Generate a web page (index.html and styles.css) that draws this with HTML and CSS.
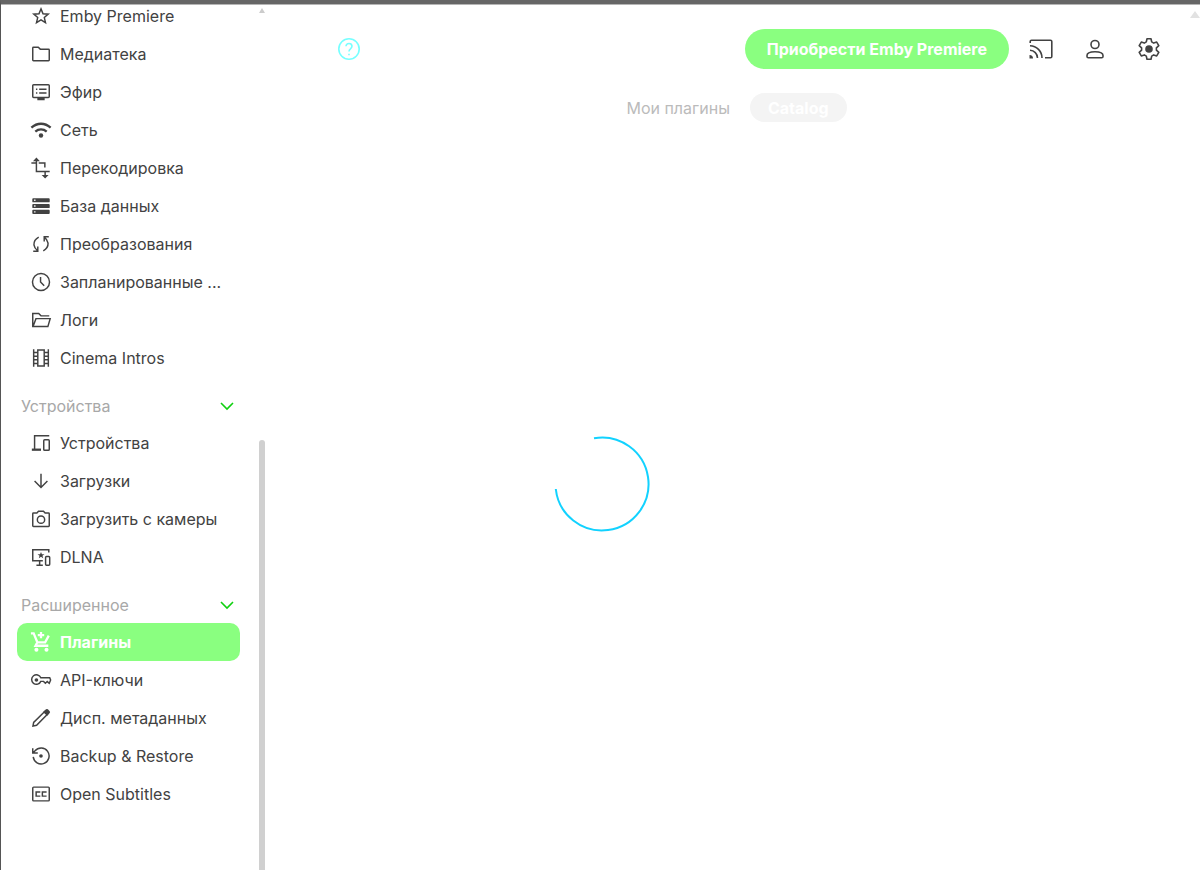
FILE: index.html
```html
<!DOCTYPE html>
<html lang="ru">

<head>
    <meta charset="UTF-8">
    <meta name="viewport" content="width=device-width, initial-scale=1.0">
    <title>Emby</title>
    <link rel="stylesheet" href="styles.css">
</head>

<body>
<div class="app">
    <aside class="sidebar">
        <nav>
            <ul class="menu">
                <li><a href="#premiere"><svg viewBox="0 0 24 24"><path d="M12 4.200l2.200 5.300 5.700.5-4.300 3.700 1.300 5.600L12 16.300l-4.900 3 1.300-5.600L4.100 10l5.700-.5z"/></svg><span>Emby Premiere</span></a></li>
                <li><a href="#library"><svg viewBox="0 0 24 24"><path d="M3 5.500Q3 4.700 3.800 4.700H9l2.200 2H20.200q.8 0 .8.800v11q0 .8-.8.800H3.800q-.8 0-.8-.8z"/></svg><span>Медиатека</span></a></li>
                <li><a href="#live"><svg viewBox="0 0 24 24"><rect x="3" y="4" width="18" height="14" rx="1"/><path d="M10 9h8M10 13h8M6.500 9H8M6.500 13H8"/><path class="solid" d="M8 18h8v3H8z"/></svg><span>Эфир</span></a></li>
                <li><a href="#network"><svg viewBox="0 0 24 24"><path class="thick" d="M1.500 9.500Q6.200 5.200 12 5.200t10.500 4.300M5.800 13.700Q8.500 11.300 12 11.300t6.200 2.400"/><circle class="solid" cx="12" cy="18" r="2.400"/></svg><span>Сеть</span></a></li>
                <li><a href="#transcoding"><svg viewBox="0 0 24 24"><path d="M7 3v12.800h14.500M1.500 6.500H7M9.500 6.500h6.700v5M16.500 16v6"/><path class="solid" d="M7 .5L3.200 4.500h7.600zM16.500 23.500l-3.800-4h7.600z"/></svg><span>Перекодировка</span></a></li>
                <li><a href="#database"><svg viewBox="0 0 24 24"><path class="solid" fill-rule="evenodd" d="M3.500 3.500h17q1 0 1 1v2.500q0 1-1 1h-17q-1 0-1-1V4.500q0-1 1-1zM4.500 5v1.500H6V5zM3.500 9.800h17q1 0 1 1v2.500q0 1-1 1h-17q-1 0-1-1v-2.500q0-1 1-1zM4.500 11.300v1.500H6v-1.500zM3.500 16.200h17q1 0 1 1v2.500q0 1-1 1h-17q-1 0-1-1v-2.500q0-1 1-1zM4.500 17.700v1.500H6v-1.500z"/></svg><span>База данных</span></a></li>
                <li><a href="#conversions"><svg viewBox="0 0 24 24"><path d="M9.500 4.500Q4 7.500 4.300 13 5 17 8 19M3.500 19.800h5v-5M14.500 19.500Q20 16.500 19.700 11 19 7 16 5M20.500 4.200h-5v5"/></svg><span>Преобразования</span></a></li>
                <li><a href="#tasks" title="Запланированные задачи"><svg viewBox="0 0 24 24"><circle cx="12" cy="12" r="9.300"/><path d="M11.500 6.500v5.500l4 4.200"/></svg><span>Запланированные ...</span></a></li>
                <li><a href="#logs"><svg viewBox="0 0 24 24"><path d="M21 7.500H12L9.500 5H3v14.200h16.500L22 10.500H6.500L3.300 19"/></svg><span>Логи</span></a></li>
                <li><a href="#intros"><svg viewBox="0 0 24 24"><path d="M4 2.500v19M8.500 2.500v19M15.500 2.500v19M20 2.500v19M8.500 3.300h7M8.500 20.700h7M4 6h4.500M4 10h4.500M4 14h4.500M4 18h4.500M15.500 6H20M15.500 10H20M15.500 14H20M15.500 18H20"/></svg><span>Cinema Intros</span></a></li>
            </ul>

            <button class="section" type="button">Устройства<svg viewBox="0 0 14 10"><path d="M1 2l6 6 6-6"/></svg></button>
            <ul class="menu">
                <li><a href="#devices"><svg viewBox="0 0 24 24"><path d="M21 4H5v14.500"/><path class="thick" d="M2 19.300H12"/><rect x="15" y="8.500" width="6" height="11.500" rx="1"/></svg><span>Устройства</span></a></li>
                <li><a href="#downloads"><svg viewBox="0 0 24 24"><path d="M12 4v15M5 12l7 7 7-7"/></svg><span>Загрузки</span></a></li>
                <li><a href="#camera"><svg viewBox="0 0 24 24"><path d="M3.800 5.500H7.500L9.300 3.500h5.400l1.800 2h3.700q.8 0 .8.800v13q0 .8-.8.800H3.800q-.8 0-.8-.8v-13q0-.8.8-.8z"/><circle cx="12" cy="12.700" r="4"/></svg><span>Загрузить с камеры</span></a></li>
                <li><a href="#dlna"><svg viewBox="0 0 24 24"><path d="M20.500 7V4H3v12h11M10.500 16v5M7 21h7"/><rect x="17" y="11.500" width="4.500" height="9.500" rx="1"/><path class="solid" d="M12 6.500l1 2.500h2.800l-2.200 1.700.8 2.700L12 11.800l-2.400 1.600.8-2.700L8.200 9H11z"/></svg><span>DLNA</span></a></li>
            </ul>

            <button class="section" type="button">Расширенное<svg viewBox="0 0 14 10"><path d="M1 2l6 6 6-6"/></svg></button>
            <ul class="menu">
                <li><a class="active" href="#plugins"><svg viewBox="0 0 24 24"><path class="thick" d="M1 2.500h3L8 12.300h8.500L20.500 5M8 12.300l-2 3.800H20M12 1v7M8.500 4.500h7"/><circle class="solid" cx="7" cy="20.500" r="2.200"/><circle class="solid" cx="18" cy="20.500" r="2.200"/></svg><span>Плагины</span></a></li>
                <li><a href="#keys"><svg viewBox="0 0 24 24"><path d="M11.800 9.500H21.500L22.500 12l-1.500 3.500-2.200-1.800-2 1.800-2-2h-3A5.200 5.200 0 1 1 11.800 9.500z"/><circle class="solid" cx="7" cy="12" r="2"/></svg><span>API-ключи</span></a></li>
                <li><a href="#metadata"><svg viewBox="0 0 24 24"><path d="M3.200 20.800l.8-4L15.500 5.500l3 3L7.200 20z"/><path class="solid" d="M14.500 5l3-2.500q1-.8 2 0l2 2q.8 1 0 2l-2.500 3z"/></svg><span>Дисп. метаданных</span></a></li>
                <li><a href="#backup"><svg viewBox="0 0 24 24"><path d="M3.500 13A8.700 8.700 0 1 0 5.500 6.300L3.500 8.500M3 3.500v5.300h5.500"/><circle class="solid" cx="12" cy="12" r="2"/></svg><span>Backup &amp; Restore</span></a></li>
                <li><a href="#subtitles"><svg viewBox="0 0 24 24"><rect x="3" y="4.500" width="18" height="15" rx="1"/><path d="M10.500 10.500V9.700H6.700v4.600h3.800v-.8M17.300 10.500V9.700h-3.800v4.600h3.800v-.8"/></svg><span>Open Subtitles</span></a></li>
            </ul>
        </nav>
        <div class="scrollbar">
            <div class="scroll-up"></div>
            <div class="scroll-thumb"></div>
        </div>
    </aside>

    <main>
        <header>
            <a class="help" href="#help" aria-label="Справка"><svg viewBox="0 0 24 24"><circle cx="12" cy="12" r="10.200"/><path d="M9 9.300Q9.200 6.500 12 6.500t3 2.600q0 1.600-1.500 2.700T12 14.500"/><path d="M12 16.700v1.600"/></svg></a>
            <button class="premiere" type="button">Приобрести Emby Premiere</button>
            <button class="icon" type="button" aria-label="Трансляция"><svg viewBox="0 0 24 24"><path d="M1.200 6V4.500q0-1.300 1.300-1.300h19q1.300 0 1.300 1.300v15q0 1.300-1.300 1.300H16M1 8.700A12.300 12.300 0 0 1 13 21M1 13.200A7.800 7.800 0 0 1 8.500 21"/><path class="solid" d="M.5 18a3.500 3.500 0 0 1 3.500 3.500H.5z"/></svg></button>
            <button class="icon" type="button" aria-label="Пользователь"><svg viewBox="0 0 24 24"><circle cx="12" cy="7.500" r="4"/><path d="M4 18.500q0-3.700 8-3.700t8 3.700v1q0 1.300-1.300 1.300H5.300Q4 20.800 4 19.500z"/></svg></button>
            <button class="icon" type="button" aria-label="Настройки"><svg viewBox="0 0 24 24"><path stroke-linejoin="round" d="M10 1.800h4l.7 3.100 2 1.200 3-1 2.100 3.500-2.400 2.200v2.400l2.400 2.200-2.100 3.500-3-1-2 1.200-.7 3.100h-4l-.7-3.100-2-1.200-3 1-2.100-3.500 2.400-2.200v-2.400L2.200 8.600l2.100-3.500 3 1 2-1.200z"/><circle class="solid" cx="12" cy="12" r="3.800"/></svg></button>
        </header>
        <div class="tabs">
            <button type="button">Мои плагины</button>
            <button class="selected" type="button">Catalog</button>
        </div>
    </main>
    <div class="page-scroll">
        <div class="scroll-up"></div>
    </div>

    <div class="loading">
        <svg viewBox="0 0 96 96"><path d="M40 2.200A46.500 46.500 0 1 1 1.800 53"/></svg>
    </div>
</div>
</body>

</html>
```

FILE: styles.css
```css
html, body {
    margin: 0;
    height: 100%;
    overflow: hidden;
}

body {
    font-family: Inter, "Open Sans", sans-serif;
    font-size: 16px;
    color: #424242;
    background: #fff;
}

button {
    font: inherit;
    border: 0;
    background: none;
    cursor: pointer;
}

svg {
    flex: none;
    fill: none;
    stroke: currentColor;
    stroke-width: 1.6;
}

.solid {
    fill: currentColor;
    stroke: none;
}

.thick {
    stroke-width: 2.5;
}

.app {
    position: relative;
    display: flex;
    box-sizing: border-box;
    height: 100%;
    border-top: 4px solid #666;
    border-left: 1px solid #555;
    box-shadow: inset 0 1px #b5b5b5;
}

/* sidebar */
.sidebar {
    display: flex;
    width: 264px;
    flex: none;
    overflow: hidden;
}

nav {
    flex: 1;
    min-width: 0;
    margin-top: -7px; /* list is scrolled a little */
    padding: 0 19px 0 16px;
}

.menu {
    list-style: none;
    margin: 0;
    padding: 0;
}

.menu a {
    display: flex;
    align-items: center;
    gap: 8px;
    box-sizing: border-box;
    height: 38px;
    padding: 0 13px;
    border-radius: 10px;
    color: inherit;
    text-decoration: none;
}

.menu svg {
    width: 22px;
    height: 22px;
}

.menu span {
    white-space: nowrap;
}

.menu .active {
    background: #8aff80;
    color: #fff;
    font-weight: 700;
}

.section {
    display: flex;
    justify-content: space-between;
    align-items: center;
    box-sizing: border-box;
    width: 100%;
    height: 47px;
    padding: 10px 6px 0 4px;
    color: #a8a8a8;
}

.section svg {
    width: 14px;
    height: 10px;
    color: #10d010;
}

.scrollbar {
    display: flex;
    flex-direction: column;
    align-items: center;
    justify-content: space-between;
    width: 6px;
}

.scroll-up {
    width: 0;
    margin-top: 4px;
    border: 3px solid transparent;
    border-top: 0;
    border-bottom: 5px solid #ccc;
}

.scroll-thumb {
    width: 6px;
    height: 430px;
    max-height: 50%;
    border-radius: 3px 3px 0 0;
    background: #d0d0d0;
}

.page-scroll {
    width: 10px;
    padding-top: 3px;
}

.page-scroll .scroll-up {
    border-width: 0 5px 7px;
    border-bottom-color: #e2e2e2;
}

/* content */
main {
    flex: 1;
    min-width: 0;
}

header {
    display: flex;
    align-items: center;
    gap: 14px;
    height: 40px;
    padding: 25px 21px 0 72px;
}

.help {
    display: flex;
    margin-right: auto;
    color: #7ff;
}

.help svg {
    width: 24px;
    height: 24px;
}

.premiere {
    height: 40px;
    padding: 0 22px;
    margin-right: -2px;
    border-radius: 20px;
    background: #8aff80;
    color: #fff;
    font-weight: 700;
}

.icon {
    display: flex;
    align-items: center;
    justify-content: center;
    width: 40px;
    height: 40px;
    padding: 0;
    color: #424242;
}

.icon svg {
    width: 24px;
    height: 24px;
}

.tabs {
    display: flex;
    justify-content: center;
    gap: 2px;
    margin-top: 24px;
}

.tabs button {
    height: 29px;
    padding: 0 18px;
    border-radius: 15px;
    color: #bbb;
}

.tabs .selected {
    background: #f4f4f4;
    color: #fff;
    font-weight: 700;
}

/* spinner lies over the whole window, below the header */
.loading {
    position: absolute;
    inset: 94px 0 0 2px;
    display: flex;
    align-items: center;
    justify-content: center;
    pointer-events: none;
}

.loading svg {
    width: 96px;
    height: 96px;
    color: #12d2ff;
    stroke-width: 2;
}
```
